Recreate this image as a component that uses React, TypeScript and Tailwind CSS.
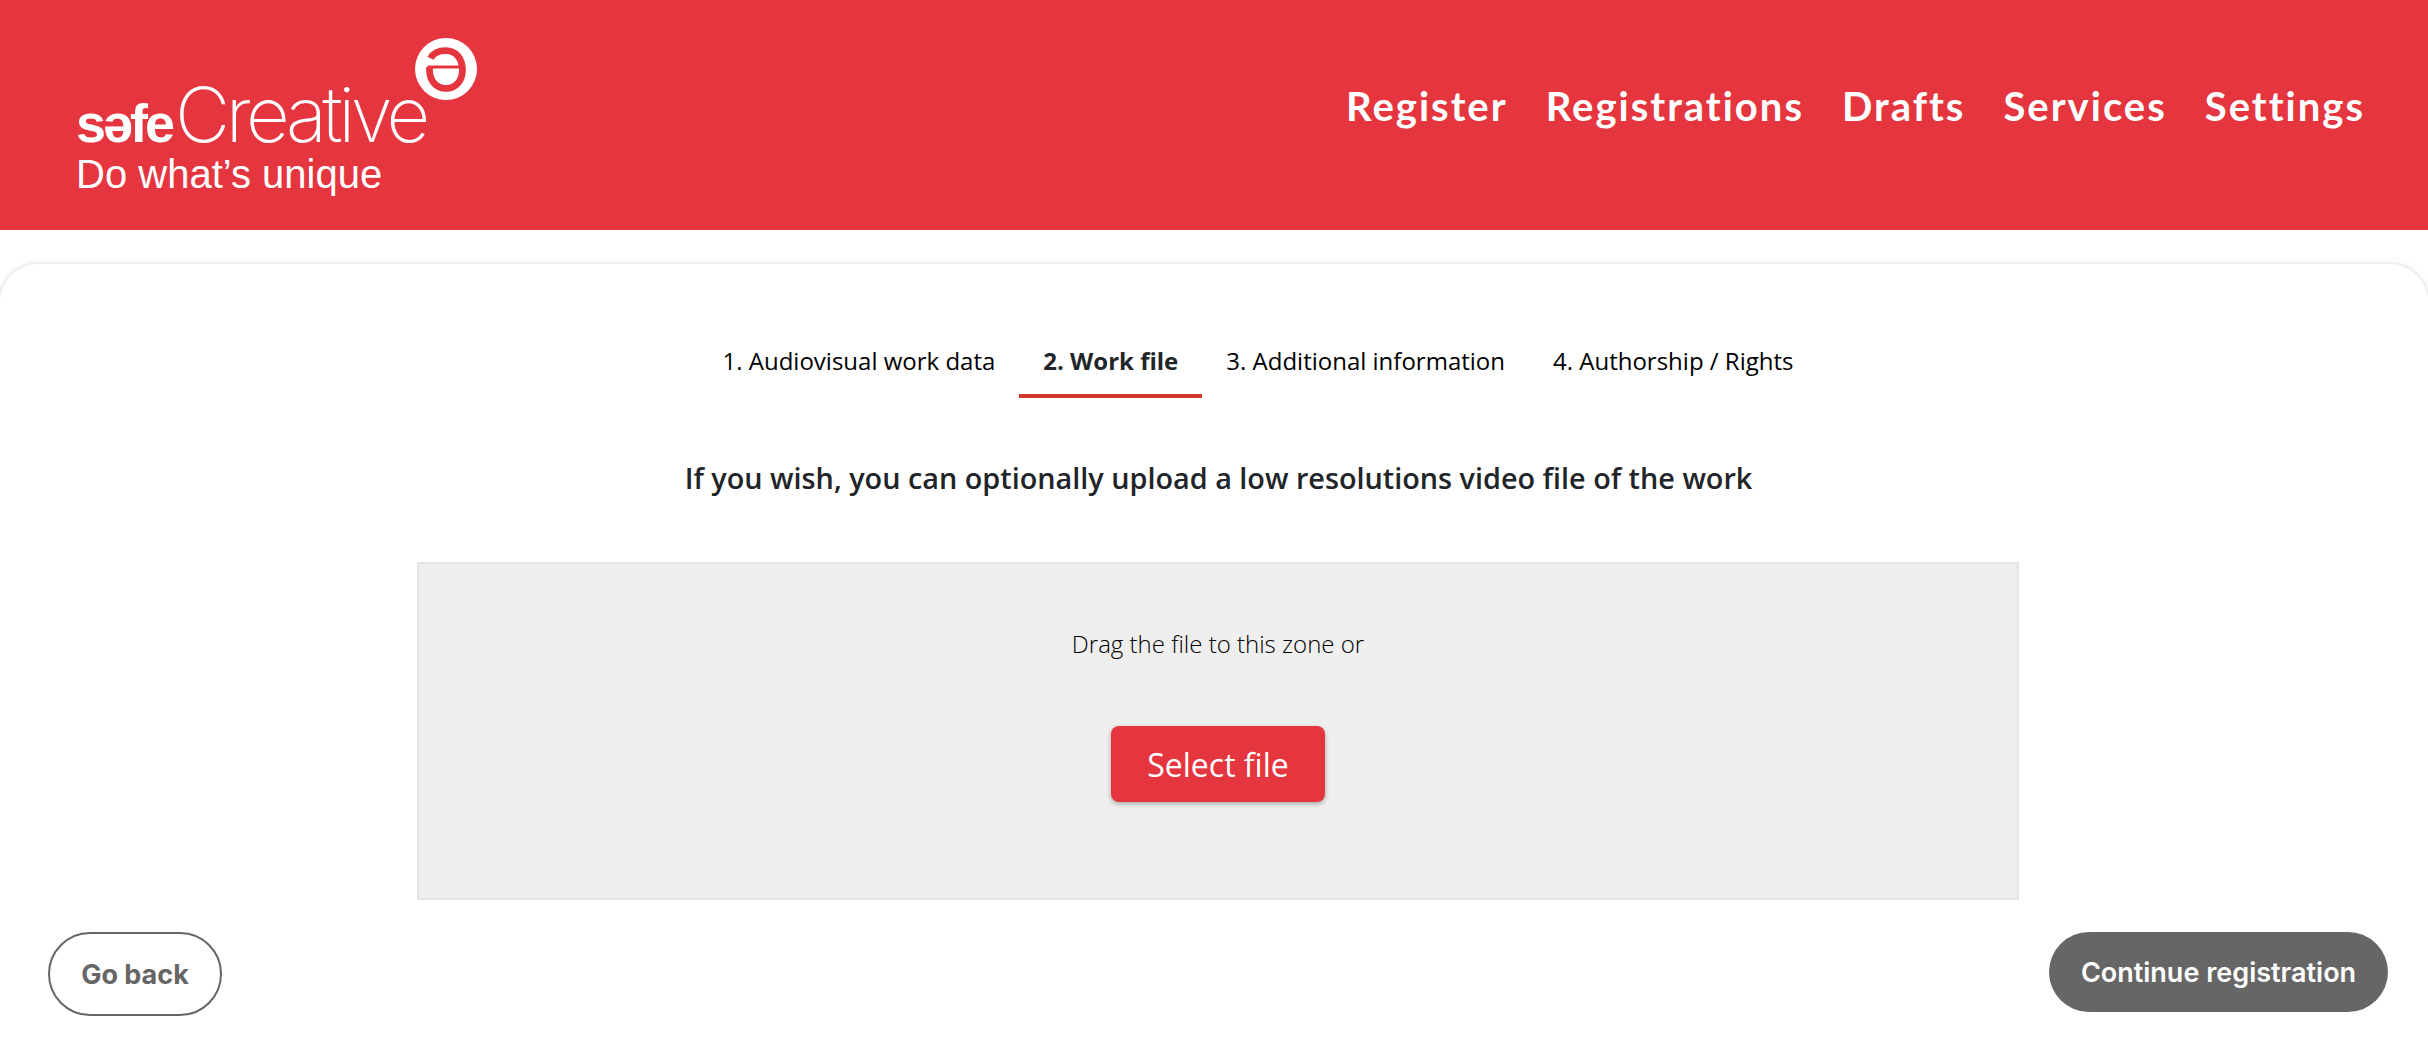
const navItems = ['Register', 'Registrations', 'Drafts', 'Services', 'Settings'];

const steps = [
  { label: '1. Audiovisual work data', active: false },
  { label: '2. Work file', active: true },
  { label: '3. Additional information', active: false },
  { label: '4. Authorship / Rights', active: false },
];

function LogoMark() {
  return (
    <svg viewBox="0 0 64 64" className="absolute left-[375px] top-[18px] w-[62px] h-[62px]">
      <circle cx="32" cy="32" r="32" fill="#fff" />
      <path
        d="M16 21 C19 15 25 13 32 13 C42 13 49 21 49 33 C49 44 42 52 32 52 C22 52 15 44 15 33 L15 30"
        fill="none"
        stroke="#e5353e"
        strokeWidth="7"
      />
      <path d="M13 30 L50 30" fill="none" stroke="#e5353e" strokeWidth="3" />
    </svg>
  );
}

function Logo() {
  return (
    <div className="relative w-[440px] h-[190px] text-white font-['Liberation_Sans',sans-serif]">
      <LogoMark />
      <div className="absolute left-[36px] top-[66px] flex items-baseline gap-[4px] leading-[56px] whitespace-nowrap">
        <span className="text-[54px] font-bold tracking-[-3px]">səfe</span>
        <span className="text-[76px] font-['Inter',sans-serif] font-extralight tracking-[-4.5px] -ml-[1px]">Creative</span>
      </div>
      <div className="absolute left-[36px] top-[134px] text-[40px] leading-none whitespace-nowrap">Do what’s unique</div>
    </div>
  );
}

export default function App() {
  return (
    <div className="w-[2428px] h-[1062px] overflow-hidden bg-white font-['Open_Sans',sans-serif] text-[#212529]">
      <header className="h-[230px] bg-[#e5353e] flex justify-between pl-[40px] pr-[63px]">
        <div className="pt-[20px]">
          <Logo />
        </div>
        <nav className="flex gap-[38px] pt-[81px] font-['Lato',sans-serif] font-bold text-[40px] leading-[50px] tracking-[2px] text-white">
          {navItems.map((item) => (
            <a key={item}>{item}</a>
          ))}
        </nav>
      </header>

      <main className="mt-[32px] border-t-2 border-x-2 border-[#eeeeee] rounded-t-[40px] -mx-[2px] shadow-[0_-2px_6px_rgba(0,0,0,0.03)] h-[800px] flex flex-col">
        <div className="flex justify-center pt-[81px] text-[24px] leading-[32px] text-black ml-[88px]">
          {steps.map((step) => (
            <div
              key={step.label}
              className={
                step.active
                  ? 'px-[24px] pb-[17px] border-b-4 border-[#d0392b] font-bold text-[#212529]'
                  : 'px-[24px] pb-[17px] border-b-4 border-transparent'
              }
            >
              {step.label}
            </div>
          ))}
        </div>

        <h2 className="mt-[60px] text-center text-[28.8px] leading-[40px] font-semibold ml-[9px]">
          If you wish, you can optionally upload a low resolutions video file of the work
        </h2>

        <section className="mt-[64px] ml-[417px] w-[1602px] h-[338px] shrink-0 bg-[#efefef] border-2 border-[#e4e4e4] flex flex-col items-center pt-[64px] -mb-[1px]">
          <p className="text-[24px] leading-[32px] font-light text-black">Drag the file to this zone or</p>
          <button className="mt-[66px] w-[214px] h-[76px] pt-[1px] rounded-[8px] bg-[#e5353e] text-white text-[32px] shadow-[0_2px_5px_rgba(0,0,0,0.3)]">
            Select file
          </button>
        </section>

        <div className="flex justify-between items-start mt-[33px] pl-[48px] pr-[40px] font-['Inter',sans-serif] text-[27px]">
          <button className="w-[174px] h-[84px] pt-[3px] rounded-[42px] border-2 border-[#666666] font-bold text-[#666666]">
            Go back
          </button>
          <button className="w-[339px] h-[80px] pt-[3px] rounded-[40px] bg-[#666666] font-semibold text-white">
            Continue registration
          </button>
        </div>
      </main>
    </div>
  );
}
